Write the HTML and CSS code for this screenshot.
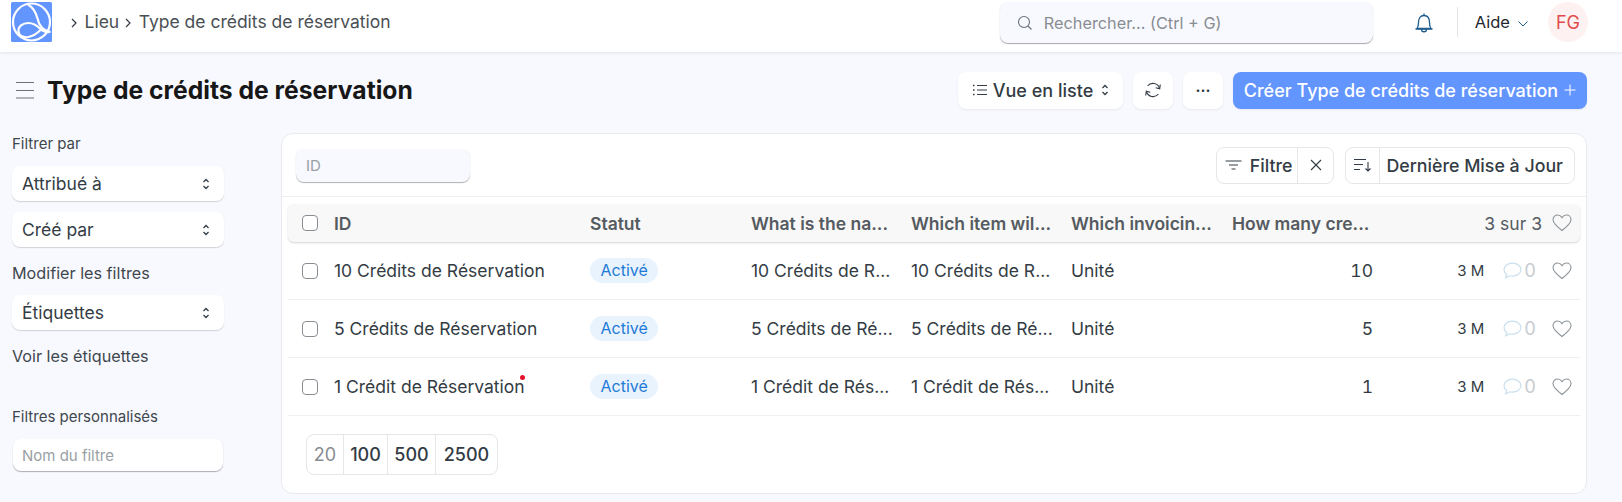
FILE: index.html
```html
<!DOCTYPE html>
<html lang="fr">
<head>
<meta charset="utf-8">
<title>Type de crédits de réservation</title>
<link rel="stylesheet" href="styles.css">
</head>
<body>
<header class="navbar">
  <svg class="logo" viewBox="0 0 41 40"><rect width="41" height="40" rx="1.500" fill="#6395ff"/><g fill="none" stroke="#fff" stroke-width="2.200"><circle cx="20.500" cy="20" r="18.500"/><path d="M17 2.500c5 3 8 8 9.500 14 1.200 6 4 12 13 13.500"/><path d="M39 30c-3.500.5-6.500 0-9.500-3-3.500-3.500-7-6-12-6-6 0-10.500 3.500-10 8.500.5 4.500 5 6.500 10 5.500 5-1 8.500-3.500 12-7"/></g></svg>
  <nav class="crumbs">
    <svg class="crumb-sep" viewBox="0 0 8 12"><path d="M2 2l4 4-4 4" fill="none" stroke="#333c44" stroke-width="1.200"/></svg>
    <span>Lieu</span>
    <svg class="crumb-sep" viewBox="0 0 8 12"><path d="M2 2l4 4-4 4" fill="none" stroke="#333c44" stroke-width="1.200"/></svg>
    <span>Type de crédits de réservation</span>
  </nav>
  <div class="search">
    <svg class="search-icon" viewBox="0 0 16 16"><circle cx="7" cy="7" r="5.500" fill="none" stroke="#687178" stroke-width="1.100"/><path d="M11 11l3.500 3.500" stroke="#687178" stroke-width="1.100"/></svg>
    <span>Rechercher... (Ctrl + G)</span>
  </div>
  <svg class="bell" viewBox="0 0 20 24"><path d="M3 17.500c1-1.500 1.500-3 1.500-6 0-4 2-7 5.500-7s5.500 3 5.500 7c0 3 .5 4.500 1.500 6z" fill="none" stroke="#1d5c8f" stroke-width="1.300" stroke-linejoin="round"/><path d="M10 2.500v2M1.500 18h17M7.500 18.500c0 3 5 3 5 0" fill="none" stroke="#1d5c8f" stroke-width="1.300"/></svg>
  <div class="nav-divider"></div>
  <div class="help"><span>Aide</span><svg class="help-chev" viewBox="0 0 12 8"><path d="M1.500 1.500L6 6l4.500-4.500" fill="none" stroke="#1d5c8f" stroke-width="1"/></svg></div>
  <div class="avatar">FG</div>
</header>

<div class="page-head">
  <svg class="burger" viewBox="0 0 18 18"><path d="M0 1.500h18M0 9.500h18M0 17h18" stroke="#6b7075" stroke-width="1.100"/></svg>
  <h1>Type de crédits de réservation</h1>
  <div class="actions">
    <button class="btn view-btn">
      <svg class="list-icon" viewBox="0 0 16 14"><path d="M5 2.500h10M5 7h10M5 11.500h10" stroke="#333c44" stroke-width="1.100"/><path d="M1 2.500h1.500M1 7h1.500M1 11.500h1.500" stroke="#333c44" stroke-width="1.300"/></svg>
      <span>Vue en liste</span>
      <svg class="updown" viewBox="0 0 8 14"><path d="M1.500 5L4 2.500 6.500 5M1.500 9L4 11.500 6.500 9" fill="none" stroke="#333c44" stroke-width="1.300"/></svg>
    </button>
    <button class="btn icon-btn">
      <svg class="refresh" viewBox="0 0 18 18"><path d="M15.500 7.500A6.800 6.800 0 0 0 3.600 5M2.500 10.500A6.800 6.800 0 0 0 14.400 13" fill="none" stroke="#333c44" stroke-width="1.100"/><path d="M16.300 3.500l-.6 4.200-4-1M1.700 14.500l.6-4.200 4 1" fill="none" stroke="#333c44" stroke-width="1.100"/></svg>
    </button>
    <button class="btn icon-btn dots">···</button>
    <button class="btn primary"><span>Créer Type de crédits de réservation</span><svg class="plus" viewBox="0 0 12 12"><path d="M6 .5v11M.5 6h11" stroke="#fff" stroke-width="1"/></svg></button>
  </div>
</div>

<main class="layout">
  <aside class="sidebar">
    <div class="side-label first">Filtrer par</div>
    <div class="side-select"><span>Attribué à</span><svg class="updown" viewBox="0 0 8 14"><path d="M1.500 5L4 2.500 6.500 5M1.500 9L4 11.500 6.500 9" fill="none" stroke="#333c44" stroke-width="1.300"/></svg></div>
    <div class="side-select"><span>Créé par</span><svg class="updown" viewBox="0 0 8 14"><path d="M1.500 5L4 2.500 6.500 5M1.500 9L4 11.500 6.500 9" fill="none" stroke="#333c44" stroke-width="1.300"/></svg></div>
    <div class="side-link">Modifier les filtres</div>
    <div class="side-select"><span>Étiquettes</span><svg class="updown" viewBox="0 0 8 14"><path d="M1.500 5L4 2.500 6.500 5M1.500 9L4 11.500 6.500 9" fill="none" stroke="#333c44" stroke-width="1.300"/></svg></div>
    <div class="side-link">Voir les étiquettes</div>
    <div class="side-label custom">Filtres personnalisés</div>
    <div class="side-input">Nom du filtre</div>
  </aside>

  <section class="card">
    <div class="toolbar">
      <div class="id-input">ID</div>
      <div class="tool-group">
        <div class="seg">
          <div class="seg-item filter"><svg class="filter-icon" viewBox="0 0 16 12"><path d="M0 2h16M3.500 6h9M6 10h4" stroke="#333c44" stroke-width="1.100"/></svg><span>Filtre</span></div>
          <div class="seg-item close"><svg class="x-icon" viewBox="0 0 12 12"><path d="M1 1l10 10M11 1L1 11" stroke="#333c44" stroke-width="1.100"/></svg></div>
        </div>
        <div class="seg">
          <div class="seg-item sort"><svg class="sort-icon" viewBox="0 0 18 14"><path d="M0 1.500h12M0 6.500h9M0 11.500h6" stroke="#333c44" stroke-width="1.100"/><path d="M14 4v9M11.500 10.500l2.500 2.500 2.500-2.500" fill="none" stroke="#333c44" stroke-width="1.100"/></svg></div>
          <div class="seg-item sort-label">Dernière Mise à Jour</div>
        </div>
      </div>
    </div>

    <div class="row head">
      <span class="check"></span>
      <span class="c-id">ID</span>
      <span class="c-status">Statut</span>
      <span class="c-col">What is the na...</span>
      <span class="c-col">Which item wil...</span>
      <span class="c-col">Which invoicin...</span>
      <span class="c-how">How many cre...</span>
      <span class="c-meta"><span class="count">3 sur 3</span><svg class="heart" viewBox="0 0 20 18"><path d="M10 16.500C4 12 1 9 1 5.600 1 3 3 1 5.500 1 7.500 1 9 2 10 3.600 11 2 12.500 1 14.500 1 17 1 19 3 19 5.600 19 9 16 12 10 16.500z" fill="none" stroke="#8d9499" stroke-width="1.100"/></svg></span>
    </div>

    <div class="row item">
      <span class="check"></span>
      <span class="c-id">10 Crédits de Réservation</span>
      <span class="c-status"><span class="pill">Activé</span></span>
      <span class="c-col">10 Crédits de R...</span>
      <span class="c-col">10 Crédits de R...</span>
      <span class="c-col">Unité</span>
      <span class="c-num">10</span>
      <span class="c-meta"><span class="age">3 M</span><svg class="bubble" viewBox="0 0 18 16"><path d="M9 1C4.600 1 1 3.700 1 7.200c0 1.800 1 3.400 2.500 4.500L2.500 15l4-2c.8.200 1.600.300 2.500.300 4.400 0 8-2.700 8-6.100S13.400 1 9 1z" fill="none" stroke="#c9dfee" stroke-width="1.100"/></svg><span class="zero">0</span><svg class="heart" viewBox="0 0 20 18"><path d="M10 16.500C4 12 1 9 1 5.600 1 3 3 1 5.500 1 7.500 1 9 2 10 3.600 11 2 12.500 1 14.500 1 17 1 19 3 19 5.600 19 9 16 12 10 16.500z" fill="none" stroke="#8d9499" stroke-width="1.100"/></svg></span>
    </div>

    <div class="row item">
      <span class="check"></span>
      <span class="c-id">5 Crédits de Réservation</span>
      <span class="c-status"><span class="pill">Activé</span></span>
      <span class="c-col">5 Crédits de Ré...</span>
      <span class="c-col">5 Crédits de Ré...</span>
      <span class="c-col">Unité</span>
      <span class="c-num">5</span>
      <span class="c-meta"><span class="age">3 M</span><svg class="bubble" viewBox="0 0 18 16"><path d="M9 1C4.600 1 1 3.700 1 7.200c0 1.800 1 3.400 2.500 4.500L2.500 15l4-2c.8.200 1.600.300 2.500.300 4.400 0 8-2.700 8-6.100S13.400 1 9 1z" fill="none" stroke="#c9dfee" stroke-width="1.100"/></svg><span class="zero">0</span><svg class="heart" viewBox="0 0 20 18"><path d="M10 16.500C4 12 1 9 1 5.600 1 3 3 1 5.500 1 7.500 1 9 2 10 3.600 11 2 12.500 1 14.500 1 17 1 19 3 19 5.600 19 9 16 12 10 16.500z" fill="none" stroke="#8d9499" stroke-width="1.100"/></svg></span>
    </div>

    <div class="row item">
      <span class="check"></span>
      <span class="c-id"><span class="unseen">1 Crédit de Réservation</span></span>
      <span class="c-status"><span class="pill">Activé</span></span>
      <span class="c-col">1 Crédit de Rés...</span>
      <span class="c-col">1 Crédit de Rés...</span>
      <span class="c-col">Unité</span>
      <span class="c-num">1</span>
      <span class="c-meta"><span class="age">3 M</span><svg class="bubble" viewBox="0 0 18 16"><path d="M9 1C4.600 1 1 3.700 1 7.200c0 1.800 1 3.400 2.500 4.500L2.500 15l4-2c.8.200 1.600.300 2.500.300 4.400 0 8-2.700 8-6.100S13.400 1 9 1z" fill="none" stroke="#c9dfee" stroke-width="1.100"/></svg><span class="zero">0</span><svg class="heart" viewBox="0 0 20 18"><path d="M10 16.500C4 12 1 9 1 5.600 1 3 3 1 5.500 1 7.500 1 9 2 10 3.600 11 2 12.500 1 14.500 1 17 1 19 3 19 5.600 19 9 16 12 10 16.500z" fill="none" stroke="#8d9499" stroke-width="1.100"/></svg></span>
    </div>

    <div class="pager">
      <span class="page-btn p20">20</span><span class="page-btn p100">100</span><span class="page-btn p500">500</span><span class="page-btn p2500">2500</span>
    </div>
  </section>
</main>
</body>
</html>
```

FILE: styles.css
```css
* { box-sizing: border-box; }
html, body { margin: 0; padding: 0; }
body {
  width: 1622px;
  height: 502px;
  overflow: hidden;
  background: #f8f9fe;
  font-family: Inter, "Liberation Sans", sans-serif;
  font-size: 17.500px;
  color: #333c44;
}
.navbar {
  height: 52px;
  background: #fff;
  box-shadow: 0 1px 3px rgba(30, 40, 60, .1);
  display: flex;
  align-items: flex-start;
  padding: 2px 34px 0 11px;
}
.logo { width: 41px; height: 40px; flex: none; }
.crumbs {
  display: flex;
  align-items: center;
  height: 40px;
  margin-left: 18px;
  gap: 5px;
  color: #4a4f54;
  line-height: 40px;
}
.crumb-sep { width: 8px; height: 12px; flex: none; margin-top: 1px; margin-right: 1.500px; }
.search {
  margin-left: auto;
  width: 373px;
  height: 41px;
  background: #f8f9fe;
  border-radius: 8px;
  box-shadow: 0 1px 1px rgba(60, 60, 70, .45);
  display: flex;
  align-items: center;
  padding-left: 17px;
  gap: 11px;
  color: #888d92;
  font-size: 16.300px;
}
.search-icon { width: 16px; height: 16px; }
.bell { width: 20px; height: 24px; margin: 9px 0 0 41px; flex: none; }
.nav-divider { width: 1px; height: 30px; background: #e2e4e6; margin: 5px 0 0 23px; }
.help {
  display: flex;
  align-items: center;
  height: 40px;
  margin-left: 17px;
  color: #1f272e;
  gap: 7px;
  font-size: 16.500px;
}
.help-chev { width: 12px; height: 8px; margin-top: 3px; }
.avatar {
  width: 40px;
  height: 40px;
  border-radius: 50%;
  background: #fdf1f1;
  color: #e24c4c;
  display: flex;
  align-items: center;
  justify-content: center;
  margin-left: 19px;
  font-size: 18px;
}
.page-head {
  height: 81px;
  display: flex;
  align-items: center;
  padding: 0 35px 5px 16px;
}
.burger { width: 18px; height: 18px; flex: none; }
h1 {
  margin: 0 0 0 13px;
  font-size: 24.700px;
  font-weight: 700;
  color: #171717;
}
.actions { margin-left: auto; display: flex; gap: 10px; }
.btn {
  height: 37px;
  border: 0;
  border-radius: 8px;
  background: #fff;
  font: inherit;
  color: #333c44;
  display: flex;
  align-items: center;
  justify-content: center;
  box-shadow: 0 1px 2px rgba(30, 40, 60, .08);
  padding: 0;
}
.view-btn { width: 165px; gap: 5px; font-size: 18px; font-weight: 500; }
.list-icon { width: 16px; height: 14px; }
.updown { width: 8px; height: 14px; flex: none; }
.view-btn .updown { margin-left: 3px; }
.icon-btn { width: 40px; }
.refresh { width: 18px; height: 18px; }
.dots { font-weight: 700; font-size: 15px; }
.primary {
  width: 354px;
  background: #6395ff;
  color: #fff;
  font-weight: 500;
  font-size: 18px;
  gap: 6px;
}
.plus { width: 12px; height: 12px; }

.layout { display: flex; align-items: flex-start; padding-left: 12px; }
.sidebar { width: 212px; flex: none; padding-top: 1px; color: #3f474e; }
.side-label { font-size: 15px; line-height: 20px; }
.side-label.first { margin-top: 0; margin-bottom: 12px; }
.side-label.custom { margin-top: 41px; margin-bottom: 12px; }
.side-select {
  height: 35px;
  border-radius: 8px;
  background: #fff;
  box-shadow: 0 1px 1px rgba(60, 60, 70, .2);
  display: flex;
  align-items: center;
  justify-content: space-between;
  padding: 0 14px 0 10px;
  margin-bottom: 11px;
  color: #333c44;
}
.side-link { font-size: 16.200px; line-height: 20px; margin: 16px 0 12px; }
.side-input {
  height: 32px;
  margin-left: 1px;
  width: 210px;
  border-radius: 8px;
  background: #fff;
  box-shadow: 0 1px 1px rgba(60, 60, 70, .4);
  display: flex;
  align-items: center;
  padding-left: 9px;
  font-size: 15px;
  color: #9a9fa4;
}
.card {
  width: 1306px;
  height: 361px;
  margin-left: 57px;
  background: #fff;
  border: 1px solid #e8eaee;
  border-radius: 12px;
  padding: 0 6px;
}
.toolbar {
  height: 63px;
  margin: 0 -6px;
  padding: 0 11px 0 14px;
  border-bottom: 1px solid #edeff1;
  display: flex;
  align-items: center;
  justify-content: space-between;
}
.id-input {
  width: 174px;
  height: 33px;
  border-radius: 8px;
  background: #f8f9fe;
  box-shadow: 0 1px 1px rgba(60, 60, 70, .4);
  padding-left: 10px;
  display: flex;
  align-items: center;
  font-size: 15px;
  color: #9a9fa4;
}
.tool-group { display: flex; gap: 11px; }
.seg {
  display: flex;
  height: 37px;
  border: 1px solid #e4e6e8;
  border-radius: 8px;
  background: #fff;
}
.seg-item { display: flex; align-items: center; font-weight: 500; font-size: 17.800px; }
.seg-item + .seg-item { border-left: 1px solid #e4e6e8; }
.filter { padding: 0 5px 0 8px; gap: 8px; }
.filter-icon { width: 17px; height: 12px; }
.close { width: 36px; justify-content: center; }
.x-icon { width: 12px; height: 12px; }
.sort { width: 33px; justify-content: center; }
.sort-icon { width: 18px; height: 14px; }
.sort-label { padding: 0 11px 0 6px; }
.row {
  display: grid;
  grid-template-columns: 16px 272px 161px 160px 160px 161px 141px 1fr;
  align-items: center;
  padding: 0 7px 0 14px;
}
.row > .c-id { margin-left: 16px; }
.head {
  height: 38px;
  margin-top: 7px;
  background: #f8f8f8;
  border-radius: 6px;
  box-shadow: 0 1px 2px rgba(30, 40, 60, .2);
  font-weight: 600;
  color: #555b60;
}
.item {
  height: 58px;
  border-bottom: 1px solid #edeff1;
}
.check {
  width: 16px;
  height: 16px;
  border: 1px solid #888d92;
  border-radius: 4px;
  background: #fff;
}
.c-num { text-align: right; font-variant-numeric: tabular-nums; }
.c-how { white-space: nowrap; }
.c-meta {
  display: flex;
  align-items: center;
  justify-content: flex-end;
  font-weight: 400;
}
.count { margin-right: 10px; color: #555b60; }
.heart { width: 20px; height: 18px; flex: none; margin-right: 1px; }
.age { font-size: 15px; color: #333c44; margin-right: 19px; }
.bubble { width: 19px; height: 17px; flex: none; margin-right: 2px; }
.zero { color: #c7ccd1; margin-right: 16px; font-size: 18px; font-variant-numeric: tabular-nums; }
.pill {
  display: inline-block;
  height: 25px;
  line-height: 25px;
  padding: 0 10.500px;
  border-radius: 13px;
  background: #e8f3fd;
  color: #1f7ad6;
  font-size: 16px;
}
.unseen { position: relative; }
.unseen::after {
  content: "";
  position: absolute;
  right: 0;
  top: -1px;
  width: 5px;
  height: 5px;
  border-radius: 50%;
  background: #e8112d;
}
.pager {
  display: inline-flex;
  height: 41px;
  margin: 18px 0 0 18px;
  border: 1px solid #e4e6e8;
  border-radius: 8px;
}
.page-btn { display: flex; align-items: center; justify-content: center; font-weight: 500; font-size: 18px; }
.page-btn + .page-btn { border-left: 1px solid #e4e6e8; }
.p20 { width: 36px; color: #888d92; font-weight: 400; }
.p100 { width: 44px; }
.p500 { width: 48px; }
.p2500 { width: 62px; }
```
